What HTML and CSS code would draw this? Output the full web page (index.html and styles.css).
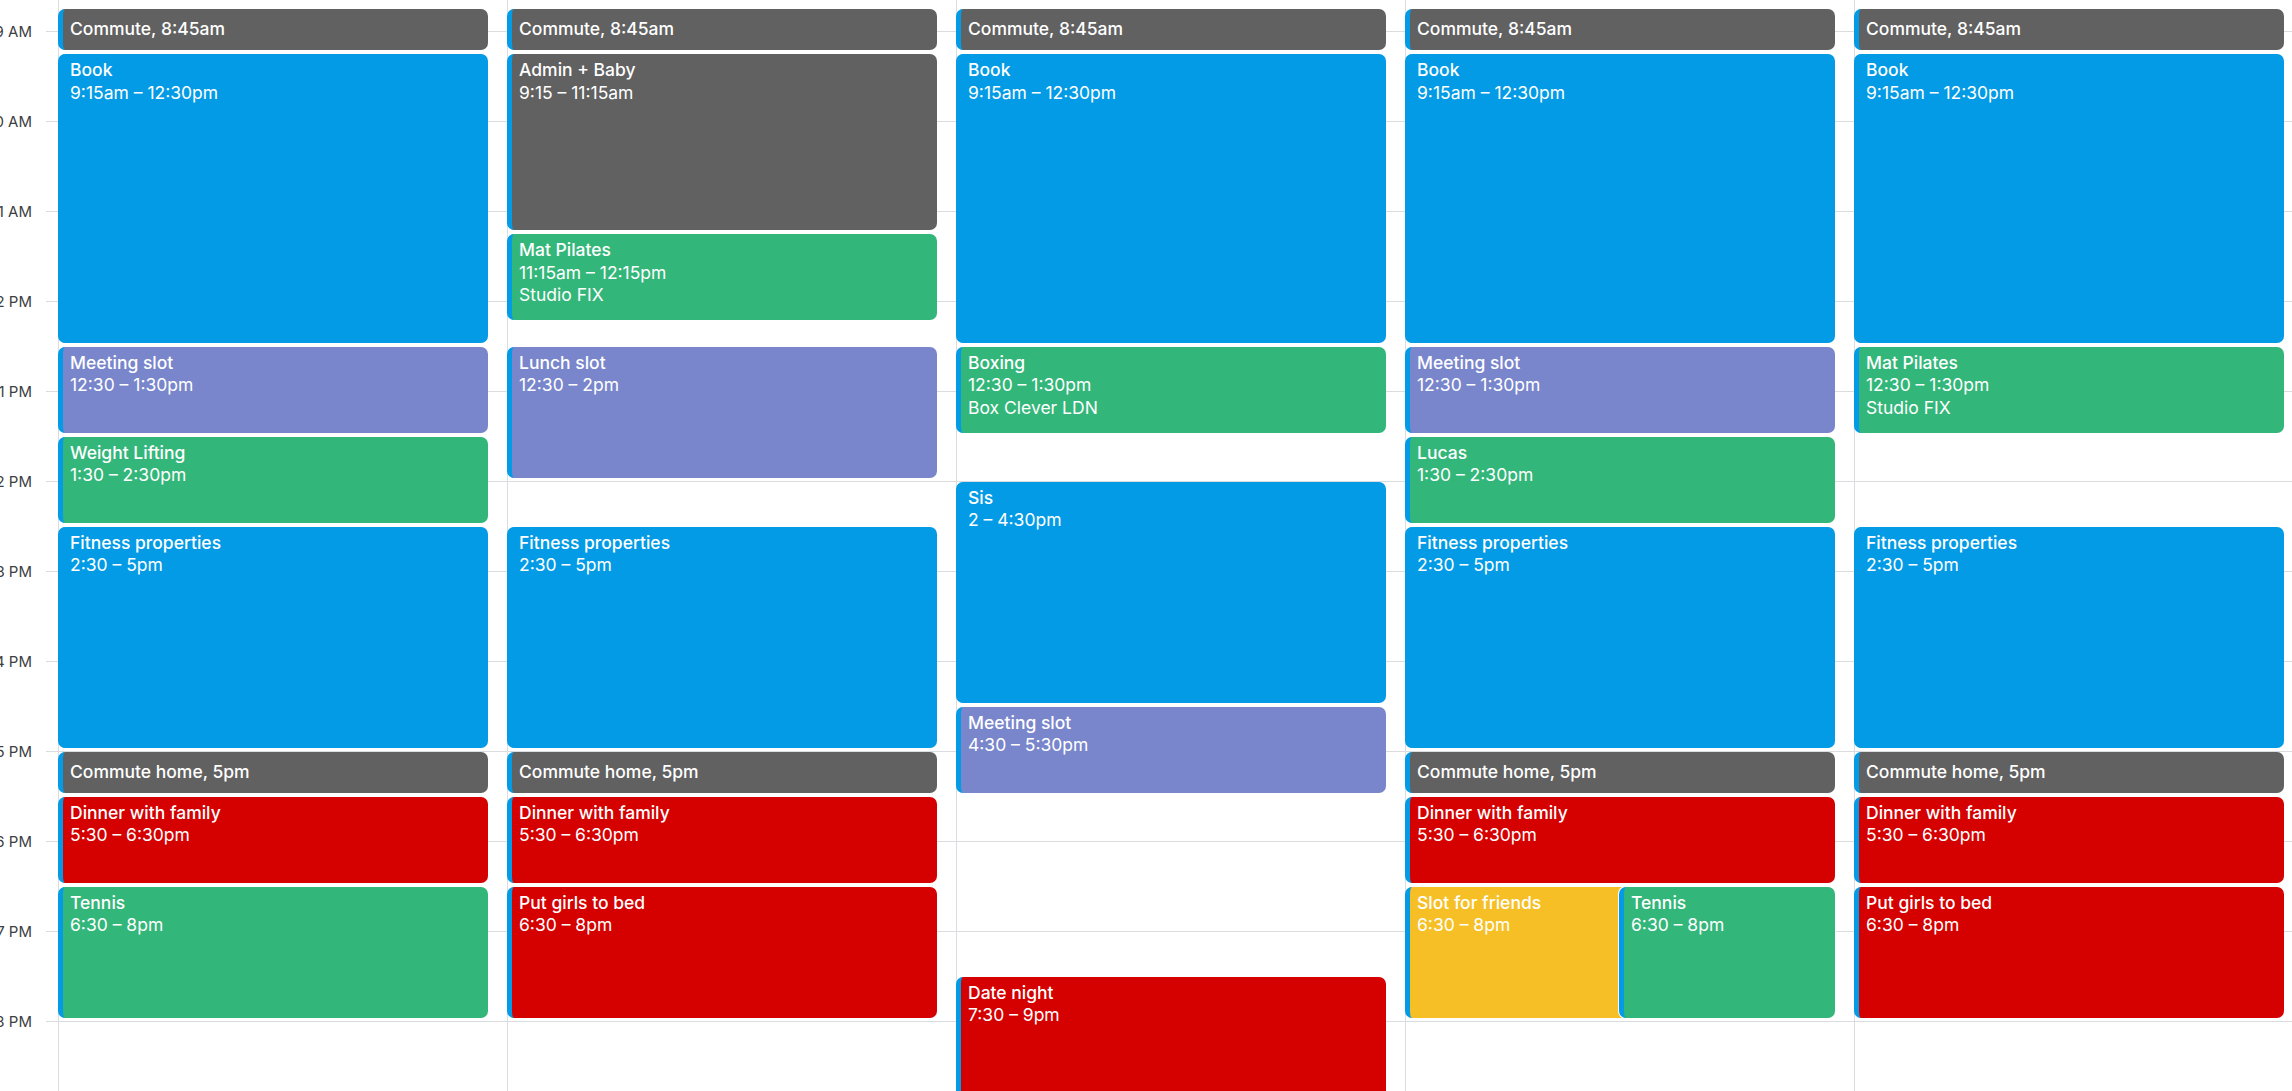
FILE: index.html
```html
<!DOCTYPE html>
<html lang="en">
<head>
<meta charset="utf-8">
<title>Week</title>
<link rel="stylesheet" href="styles.css">
</head>
<body>
<div class="cal">
  <div class="gutter">
    <div class="hour"><span class="lbl">9 AM</span><i class="tick"></i></div>
    <div class="hour"><span class="lbl">10 AM</span><i class="tick"></i></div>
    <div class="hour"><span class="lbl">11 AM</span><i class="tick"></i></div>
    <div class="hour"><span class="lbl">12 PM</span><i class="tick"></i></div>
    <div class="hour"><span class="lbl">1 PM</span><i class="tick"></i></div>
    <div class="hour"><span class="lbl">2 PM</span><i class="tick"></i></div>
    <div class="hour"><span class="lbl">3 PM</span><i class="tick"></i></div>
    <div class="hour"><span class="lbl">4 PM</span><i class="tick"></i></div>
    <div class="hour"><span class="lbl">5 PM</span><i class="tick"></i></div>
    <div class="hour"><span class="lbl">6 PM</span><i class="tick"></i></div>
    <div class="hour"><span class="lbl">7 PM</span><i class="tick"></i></div>
    <div class="hour"><span class="lbl">8 PM</span><i class="tick"></i></div>
  </div>
  <div class="days">
    <div class="day">
      <div class="event short graphite" style="top:9px;height:41px"><span class="title">Commute</span>, 8:45am</div>
      <div class="event peacock" style="top:54px;height:288.5px"><div class="title">Book</div><div>9:15am – 12:30pm</div></div>
      <div class="event lavender" style="top:346.5px;height:86px"><div class="title">Meeting slot</div><div>12:30 – 1:30pm</div></div>
      <div class="event sage" style="top:436.5px;height:86px"><div class="title">Weight Lifting</div><div>1:30 – 2:30pm</div></div>
      <div class="event peacock" style="top:526.5px;height:221px"><div class="title">Fitness properties</div><div>2:30 – 5pm</div></div>
      <div class="event short graphite" style="top:751.5px;height:41px"><span class="title">Commute home</span>, 5pm</div>
      <div class="event tomato" style="top:796.5px;height:86px"><div class="title">Dinner with family</div><div>5:30 – 6:30pm</div></div>
      <div class="event sage" style="top:886.5px;height:131px"><div class="title">Tennis</div><div>6:30 – 8pm</div></div>
    </div>
    <div class="day">
      <div class="event short graphite" style="top:9px;height:41px"><span class="title">Commute</span>, 8:45am</div>
      <div class="event graphite" style="top:54px;height:176px"><div class="title">Admin + Baby</div><div>9:15 – 11:15am</div></div>
      <div class="event sage" style="top:234px;height:86px"><div class="title">Mat Pilates</div><div>11:15am – 12:15pm</div><div>Studio FIX</div></div>
      <div class="event lavender" style="top:346.5px;height:131px"><div class="title">Lunch slot</div><div>12:30 – 2pm</div></div>
      <div class="event peacock" style="top:526.5px;height:221px"><div class="title">Fitness properties</div><div>2:30 – 5pm</div></div>
      <div class="event short graphite" style="top:751.5px;height:41px"><span class="title">Commute home</span>, 5pm</div>
      <div class="event tomato" style="top:796.5px;height:86px"><div class="title">Dinner with family</div><div>5:30 – 6:30pm</div></div>
      <div class="event tomato" style="top:886.5px;height:131px"><div class="title">Put girls to bed</div><div>6:30 – 8pm</div></div>
    </div>
    <div class="day">
      <div class="event short graphite" style="top:9px;height:41px"><span class="title">Commute</span>, 8:45am</div>
      <div class="event peacock" style="top:54px;height:288.5px"><div class="title">Book</div><div>9:15am – 12:30pm</div></div>
      <div class="event sage" style="top:346.5px;height:86px"><div class="title">Boxing</div><div>12:30 – 1:30pm</div><div>Box Clever LDN</div></div>
      <div class="event peacock" style="top:481.5px;height:221px"><div class="title">Sis</div><div>2 – 4:30pm</div></div>
      <div class="event lavender" style="top:706.5px;height:86px"><div class="title">Meeting slot</div><div>4:30 – 5:30pm</div></div>
      <div class="event tomato" style="top:976.5px;height:131px"><div class="title">Date night</div><div>7:30 – 9pm</div></div>
    </div>
    <div class="day">
      <div class="event short graphite" style="top:9px;height:41px"><span class="title">Commute</span>, 8:45am</div>
      <div class="event peacock" style="top:54px;height:288.5px"><div class="title">Book</div><div>9:15am – 12:30pm</div></div>
      <div class="event lavender" style="top:346.5px;height:86px"><div class="title">Meeting slot</div><div>12:30 – 1:30pm</div></div>
      <div class="event sage" style="top:436.5px;height:86px"><div class="title">Lucas</div><div>1:30 – 2:30pm</div></div>
      <div class="event peacock" style="top:526.5px;height:221px"><div class="title">Fitness properties</div><div>2:30 – 5pm</div></div>
      <div class="event short graphite" style="top:751.5px;height:41px"><span class="title">Commute home</span>, 5pm</div>
      <div class="event tomato" style="top:796.5px;height:86px"><div class="title">Dinner with family</div><div>5:30 – 6:30pm</div></div>
      <div class="event banana" style="top:886.5px;height:131px;width:226px"><div class="title">Slot for friends</div><div>6:30 – 8pm</div></div>
      <div class="event sage overlap" style="top:886.5px;height:131px;left:213px;width:216px"><div class="title">Tennis</div><div>6:30 – 8pm</div></div>
    </div>
    <div class="day">
      <div class="event short graphite" style="top:9px;height:41px"><span class="title">Commute</span>, 8:45am</div>
      <div class="event peacock" style="top:54px;height:288.5px"><div class="title">Book</div><div>9:15am – 12:30pm</div></div>
      <div class="event sage" style="top:346.5px;height:86px"><div class="title">Mat Pilates</div><div>12:30 – 1:30pm</div><div>Studio FIX</div></div>
      <div class="event peacock" style="top:526.5px;height:221px"><div class="title">Fitness properties</div><div>2:30 – 5pm</div></div>
      <div class="event short graphite" style="top:751.5px;height:41px"><span class="title">Commute home</span>, 5pm</div>
      <div class="event tomato" style="top:796.5px;height:86px"><div class="title">Dinner with family</div><div>5:30 – 6:30pm</div></div>
      <div class="event tomato" style="top:886.5px;height:131px"><div class="title">Put girls to bed</div><div>6:30 – 8pm</div></div>
    </div>
  </div>
</div>
</body>
</html>
```
FILE: styles.css
```css
html, body {
  margin: 0;
  padding: 0;
  background: #fff;
  overflow: hidden;
}
body {
  width: 2292px;
  height: 1091px;
  font-family: Inter, Roboto, "Liberation Sans", sans-serif;
}
.cal {
  display: flex;
  height: 1091px;
  overflow: hidden;
}
.gutter {
  flex: none;
  width: 58px;
  display: flex;
  flex-direction: column;
  margin-top: -14px;
}
.hour {
  flex: none;
  height: 90px;
  display: flex;
  align-items: center;
  justify-content: flex-end;
}
.lbl {
  flex: none;
  white-space: nowrap;
  font-size: 15px;
  color: #3c4043;
  margin-right: 14px;
  line-height: 18px;
  position: relative;
  top: 1px;
}
.tick {
  flex: none;
  width: 12px;
  height: 1px;
  background: #dadce0;
}
.days {
  flex: none;
  display: flex;
  height: 1091px;
  background: linear-gradient(to bottom, #dadce0 1px, transparent 1px) 0 31px / 100% 90px repeat-y;
}
.day {
  flex: none;
  width: 448px;
  border-left: 1px solid #dadce0;
  position: relative;
}
.event {
  position: absolute;
  left: -1px;
  width: 430px;
  box-sizing: border-box;
  border-left: 5px solid #039be5;
  border-radius: 7px;
  padding: 5px 8px 0 7px;
  color: #fff;
  font-size: 17.5px;
  line-height: 22.5px;
  overflow: hidden;
  white-space: nowrap;
}
.event.short {
  padding-top: 9px;
  font-weight: 500;
}
.title {
  font-weight: 500;
}
.overlap {
  box-shadow: 0 0 0 1px #fff;
}
.graphite { background: #616161; }
.peacock { background: #039be5; }
.lavender { background: #7986cb; }
.sage { background: #33b679; }
.tomato { background: #d50000; }
.banana { background: #f6bf26; }
```
